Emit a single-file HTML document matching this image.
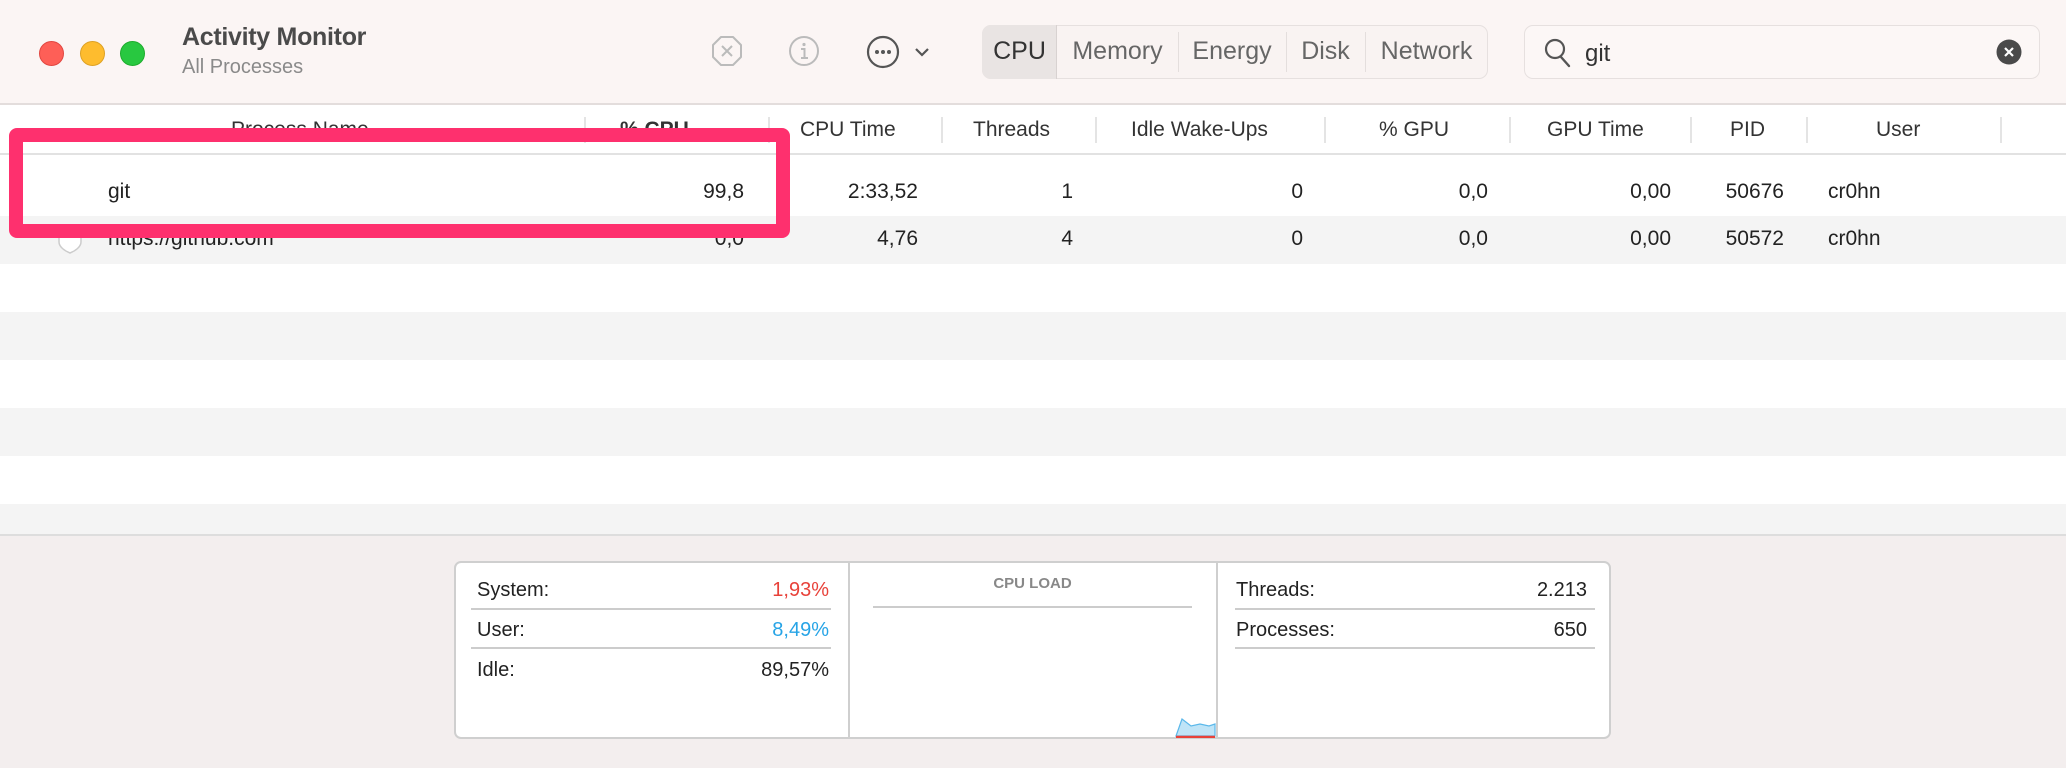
<!DOCTYPE html>
<html><head><meta charset="utf-8"><style>
*{margin:0;padding:0;box-sizing:border-box}
body{width:2066px;height:768px;overflow:hidden;background:#fff;font-family:"Liberation Sans",sans-serif;position:relative;color:#222}
.a{position:absolute;white-space:nowrap}
.tb{position:absolute;left:0;top:0;width:2066px;height:105px;background:#fbf5f4;border-bottom:2px solid #e3dddc}
.dot{position:absolute;top:41px;width:25px;height:25px;border-radius:50%}
.hd{position:absolute;top:105px;left:0;width:2066px;height:50px;background:#fff;border-bottom:2px solid #e2e2e2}
.hl{position:absolute;top:12px;height:26px;width:2px;background:#e4e4e4}
.ht{position:absolute;top:13px;font-size:21px;color:#333;white-space:nowrap}
.row{position:absolute;left:0;width:2066px}
.c{position:absolute;font-size:21px;color:#222;white-space:nowrap}
.r{text-align:right}
</style></head><body>
<div class="tb">
 <div class="dot" style="left:39px;background:#fe5f57;border:1px solid #e14640"></div>
 <div class="dot" style="left:80px;background:#febc2e;border:1px solid #dea123"></div>
 <div class="dot" style="left:120px;background:#28c840;border:1px solid #1dac2c"></div>
 <div class="a" style="left:182px;top:23px;font-size:25px;font-weight:bold;color:#4a4a4a;letter-spacing:-0.3px">Activity Monitor</div>
 <div class="a" style="left:182px;top:56px;font-size:20px;color:#8a8a8a">All Processes</div>
 <svg class="a" style="left:711px;top:35px" width="32" height="32" viewBox="0 0 32 32"><path d="M10 2h12l8 8v12l-8 8H10l-8-8V10z" fill="none" stroke="#bbb" stroke-width="2" stroke-linejoin="round"/><path d="M11 11l10 10M21 11L11 21" stroke="#bbb" stroke-width="2"/></svg>
 <svg class="a" style="left:788px;top:35px" width="32" height="32" viewBox="0 0 32 32"><circle cx="16" cy="16" r="14" fill="none" stroke="#bbb" stroke-width="2"/><circle cx="16" cy="9.5" r="1.6" fill="#bbb"/><path d="M13 14h3.5v9M13 23h7" stroke="#bbb" stroke-width="2" fill="none"/></svg>
 <svg class="a" style="left:866px;top:35px" width="34" height="34" viewBox="0 0 34 34"><circle cx="17" cy="17" r="15" fill="none" stroke="#555" stroke-width="2.2"/><circle cx="11" cy="17" r="2" fill="#555"/><circle cx="17" cy="17" r="2" fill="#555"/><circle cx="23" cy="17" r="2" fill="#555"/></svg>
 <svg class="a" style="left:914px;top:46px" width="16" height="12" viewBox="0 0 16 12"><path d="M2 3l6 6 6-6" fill="none" stroke="#555" stroke-width="2.2"/></svg>
 <div class="a" style="left:982px;top:25px;width:506px;height:54px;border:1px solid #e6e0df;border-radius:9px;background:#f9f3f2"></div>
 <div class="a" style="left:982px;top:25px;width:75px;height:54px;border-radius:9px 0 0 9px;background:#e9e4e3;border-right:1px solid #d8d2d1"></div>
 <div class="a" style="left:1178px;top:32px;width:1px;height:40px;background:#e4dedd"></div>
 <div class="a" style="left:1286px;top:32px;width:1px;height:40px;background:#e4dedd"></div>
 <div class="a" style="left:1365px;top:32px;width:1px;height:40px;background:#e4dedd"></div>
 <div class="a" style="left:982px;top:37px;width:75px;text-align:center;font-size:25px;color:#333">CPU</div>
 <div class="a" style="left:1057px;top:37px;width:121px;text-align:center;font-size:25px;color:#666">Memory</div>
 <div class="a" style="left:1178px;top:37px;width:108px;text-align:center;font-size:25px;color:#666">Energy</div>
 <div class="a" style="left:1286px;top:37px;width:79px;text-align:center;font-size:25px;color:#666">Disk</div>
 <div class="a" style="left:1365px;top:37px;width:123px;text-align:center;font-size:25px;color:#666">Network</div>
 <div class="a" style="left:1524px;top:25px;width:516px;height:54px;border:1px solid #e6e0df;border-radius:9px;background:#fcf7f6"></div>
 <svg class="a" style="left:1543px;top:37px" width="30" height="32" viewBox="0 0 30 32"><circle cx="12" cy="12" r="9" fill="none" stroke="#555" stroke-width="2.2"/><path d="M18 20l8 9" stroke="#555" stroke-width="2.4" stroke-linecap="round"/></svg>
 <div class="a" style="left:1585px;top:40px;font-size:24px;color:#333">git</div>
 <svg class="a" style="left:1996px;top:39px" width="26" height="26" viewBox="0 0 26 26"><circle cx="13" cy="13" r="12.5" fill="#4a4a4a"/><path d="M9 9l8 8M17 9l-8 8" stroke="#fff" stroke-width="2.2"/></svg>
</div>
<div class="hd">
 <div class="hl" style="left:584px"></div><div class="hl" style="left:768px"></div><div class="hl" style="left:941px"></div><div class="hl" style="left:1095px"></div><div class="hl" style="left:1324px"></div><div class="hl" style="left:1509px"></div><div class="hl" style="left:1690px"></div><div class="hl" style="left:1806px"></div><div class="hl" style="left:2000px"></div>
 <div class="ht" style="left:231px">Process Name</div>
 <div class="ht" style="left:620px;font-weight:bold">% CPU</div>
 <svg class="a" style="left:737px;top:23px" width="14" height="10" viewBox="0 0 14 10"><path d="M2 2l5 5 5-5" fill="none" stroke="#888" stroke-width="1.8"/></svg>
 <div class="ht" style="left:800px">CPU Time</div>
 <div class="ht" style="left:973px">Threads</div>
 <div class="ht" style="left:1131px">Idle Wake-Ups</div>
 <div class="ht" style="left:1379px">% GPU</div>
 <div class="ht" style="left:1547px">GPU Time</div>
 <div class="ht" style="left:1730px">PID</div>
 <div class="ht" style="left:1876px">User</div>
</div>
<div class="row" style="top:157px;height:59px;background:#fff"></div>
<div class="row" style="top:216px;height:48px;background:#f4f4f4"></div>
<div class="row" style="top:312px;height:48px;background:#f4f4f4"></div>
<div class="row" style="top:408px;height:48px;background:#f4f4f4"></div>
<div class="row" style="top:504px;height:30px;background:#f4f4f4"></div>
<!-- row 1 -->
<div class="c" style="left:108px;top:180px">git</div>
<div class="c r" style="left:644px;top:180px;width:100px">99,8</div>
<div class="c r" style="left:818px;top:180px;width:100px">2:33,52</div>
<div class="c r" style="left:973px;top:180px;width:100px">1</div>
<div class="c r" style="left:1203px;top:180px;width:100px">0</div>
<div class="c r" style="left:1388px;top:180px;width:100px">0,0</div>
<div class="c r" style="left:1571px;top:180px;width:100px">0,00</div>
<div class="c r" style="left:1684px;top:180px;width:100px">50676</div>
<div class="c" style="left:1828px;top:180px">cr0hn</div>
<!-- row 2 -->
<svg class="a" style="left:56px;top:228px" width="28" height="28" viewBox="0 0 28 28"><path d="M3 4h22v10c0 5-6 9-11 11C9 23 3 19 3 14z" fill="#fff" stroke="#ccc" stroke-width="1.5"/></svg>
<div class="c" style="left:108px;top:227px">https://github.com</div>
<div class="c r" style="left:644px;top:227px;width:100px">0,0</div>
<div class="c r" style="left:818px;top:227px;width:100px">4,76</div>
<div class="c r" style="left:973px;top:227px;width:100px">4</div>
<div class="c r" style="left:1203px;top:227px;width:100px">0</div>
<div class="c r" style="left:1388px;top:227px;width:100px">0,0</div>
<div class="c r" style="left:1571px;top:227px;width:100px">0,00</div>
<div class="c r" style="left:1684px;top:227px;width:100px">50572</div>
<div class="c" style="left:1828px;top:227px">cr0hn</div>
<!-- pink box -->
<div class="a" style="left:9px;top:128px;width:781px;height:110px;border:14px solid #fe306e;border-radius:8px"></div>
<!-- bottom -->
<div class="a" style="left:0;top:534px;width:2066px;height:234px;background:#f3eeee;border-top:2px solid #ddd"></div>
<div class="a" style="left:454px;top:561px;width:1157px;height:178px;background:#fff;border:2px solid #cfcfcf;border-radius:7px"></div>
<div class="a" style="left:848px;top:562px;width:2px;height:176px;background:#cfcfcf"></div>
<div class="a" style="left:1216px;top:562px;width:2px;height:176px;background:#cfcfcf"></div>
<div class="a" style="left:471px;top:608px;width:360px;height:2px;background:#ccc"></div>
<div class="a" style="left:471px;top:647px;width:360px;height:2px;background:#ccc"></div>
<div class="a" style="left:1235px;top:608px;width:360px;height:2px;background:#ccc"></div>
<div class="a" style="left:1235px;top:647px;width:360px;height:2px;background:#ccc"></div>
<div class="a" style="left:873px;top:606px;width:319px;height:2px;background:#ccc"></div>
<div class="c" style="left:477px;top:579px;font-size:20px">System:</div>
<div class="c r" style="left:729px;top:579px;width:100px;font-size:20px;color:#e8423a">1,93%</div>
<div class="c" style="left:477px;top:619px;font-size:20px">User:</div>
<div class="c r" style="left:729px;top:619px;width:100px;font-size:20px;color:#27a4e6">8,49%</div>
<div class="c" style="left:477px;top:659px;font-size:20px">Idle:</div>
<div class="c r" style="left:729px;top:659px;width:100px;font-size:20px">89,57%</div>
<div class="a" style="left:873px;top:575px;width:319px;text-align:center;font-size:15px;font-weight:bold;color:#888">CPU LOAD</div>
<div class="c" style="left:1236px;top:579px;font-size:20px">Threads:</div>
<div class="c r" style="left:1487px;top:579px;width:100px;font-size:20px">2.213</div>
<div class="c" style="left:1236px;top:619px;font-size:20px">Processes:</div>
<div class="c r" style="left:1487px;top:619px;width:100px;font-size:20px">650</div>
<svg class="a" style="left:1175px;top:716px" width="41" height="22" viewBox="0 0 41 22"><path d="M1 20L7 3l9 7 9-2 9 2 6-2v12H1z" fill="#bfe4f7" stroke="#5bb8ea" stroke-width="1.2"/><path d="M1 21h39" stroke="#e8423a" stroke-width="2.5"/></svg>
</body></html>
